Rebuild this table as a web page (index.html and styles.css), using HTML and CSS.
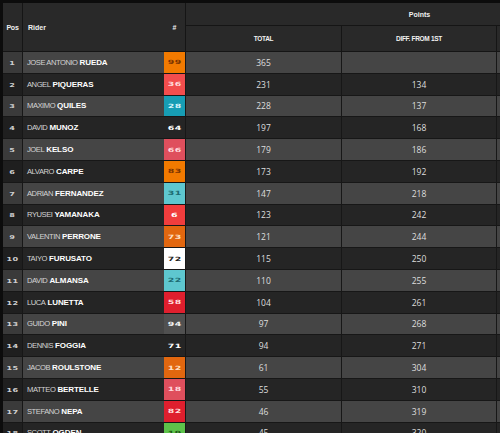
FILE: index.html
```html
<!DOCTYPE html>
<html>
<head>
<meta charset="utf-8">
<link rel="stylesheet" href="styles.css">
</head>
<body>
<div class="viewport">
<div class="wrap">
  <div class="head">
    <div class="h-pos">Pos</div>
    <div class="h-rider">Rider</div>
    <div class="h-num">#</div>
    <div class="h-points">Points</div>
    <div class="h-total">TOTAL</div>
    <div class="h-diff">DIFF. FROM 1ST</div>
    <div class="h-extra"></div>
  </div>
  <div class="body">
    <div class="row odd"><div class="pos"><span class="d">1</span></div><div class="name"><span class="fn">JOSE ANTONIO</span> <span class="ln">RUEDA</span></div><div class="num b-orange-dk"><span class="d">99</span></div><div class="pt">365</div><div class="df"></div><div class="ex"></div></div>
    <div class="row"><div class="pos"><span class="d">2</span></div><div class="name"><span class="fn">ANGEL</span> <span class="ln">PIQUERAS</span></div><div class="num b-red-lt"><span class="d">36</span></div><div class="pt">231</div><div class="df">134</div><div class="ex"></div></div>
    <div class="row odd"><div class="pos"><span class="d">3</span></div><div class="name"><span class="fn">MAXIMO</span> <span class="ln">QUILES</span></div><div class="num b-teal"><span class="d">28</span></div><div class="pt">228</div><div class="df">137</div><div class="ex"></div></div>
    <div class="row"><div class="pos"><span class="d">4</span></div><div class="name"><span class="fn">DAVID</span> <span class="ln">MUNOZ</span></div><div class="num"><span class="d">64</span></div><div class="pt">197</div><div class="df">168</div><div class="ex"></div></div>
    <div class="row odd"><div class="pos"><span class="d">5</span></div><div class="name"><span class="fn">JOEL</span> <span class="ln">KELSO</span></div><div class="num b-pink"><span class="d">66</span></div><div class="pt">179</div><div class="df">186</div><div class="ex"></div></div>
    <div class="row"><div class="pos"><span class="d">6</span></div><div class="name"><span class="fn">ALVARO</span> <span class="ln">CARPE</span></div><div class="num b-orange-dk"><span class="d">83</span></div><div class="pt">173</div><div class="df">192</div><div class="ex"></div></div>
    <div class="row odd"><div class="pos"><span class="d">7</span></div><div class="name"><span class="fn">ADRIAN</span> <span class="ln">FERNANDEZ</span></div><div class="num b-cyan"><span class="d">31</span></div><div class="pt">147</div><div class="df">218</div><div class="ex"></div></div>
    <div class="row"><div class="pos"><span class="d">8</span></div><div class="name"><span class="fn">RYUSEI</span> <span class="ln">YAMANAKA</span></div><div class="num b-red"><span class="d">6</span></div><div class="pt">123</div><div class="df">242</div><div class="ex"></div></div>
    <div class="row odd"><div class="pos"><span class="d">9</span></div><div class="name"><span class="fn">VALENTIN</span> <span class="ln">PERRONE</span></div><div class="num b-orange"><span class="d">73</span></div><div class="pt">121</div><div class="df">244</div><div class="ex"></div></div>
    <div class="row"><div class="pos"><span class="d">10</span></div><div class="name"><span class="fn">TAIYO</span> <span class="ln">FURUSATO</span></div><div class="num b-white"><span class="d">72</span></div><div class="pt">115</div><div class="df">250</div><div class="ex"></div></div>
    <div class="row odd"><div class="pos"><span class="d">11</span></div><div class="name"><span class="fn">DAVID</span> <span class="ln">ALMANSA</span></div><div class="num b-cyan"><span class="d">22</span></div><div class="pt">110</div><div class="df">255</div><div class="ex"></div></div>
    <div class="row"><div class="pos"><span class="d">12</span></div><div class="name"><span class="fn">LUCA</span> <span class="ln">LUNETTA</span></div><div class="num b-red-dk"><span class="d">58</span></div><div class="pt">104</div><div class="df">261</div><div class="ex"></div></div>
    <div class="row odd"><div class="pos"><span class="d">13</span></div><div class="name"><span class="fn">GUIDO</span> <span class="ln">PINI</span></div><div class="num b-gray"><span class="d">94</span></div><div class="pt">97</div><div class="df">268</div><div class="ex"></div></div>
    <div class="row"><div class="pos"><span class="d">14</span></div><div class="name"><span class="fn">DENNIS</span> <span class="ln">FOGGIA</span></div><div class="num"><span class="d">71</span></div><div class="pt">94</div><div class="df">271</div><div class="ex"></div></div>
    <div class="row odd"><div class="pos"><span class="d">15</span></div><div class="name"><span class="fn">JACOB</span> <span class="ln">ROULSTONE</span></div><div class="num b-orange"><span class="d">12</span></div><div class="pt">61</div><div class="df">304</div><div class="ex"></div></div>
    <div class="row"><div class="pos"><span class="d">16</span></div><div class="name"><span class="fn">MATTEO</span> <span class="ln">BERTELLE</span></div><div class="num b-pink"><span class="d">18</span></div><div class="pt">55</div><div class="df">310</div><div class="ex"></div></div>
    <div class="row odd"><div class="pos"><span class="d">17</span></div><div class="name"><span class="fn">STEFANO</span> <span class="ln">NEPA</span></div><div class="num b-red-dk"><span class="d">82</span></div><div class="pt">46</div><div class="df">319</div><div class="ex"></div></div>
    <div class="row"><div class="pos"><span class="d">18</span></div><div class="name"><span class="fn">SCOTT</span> <span class="ln">OGDEN</span></div><div class="num b-green"><span class="d">19</span></div><div class="pt">45</div><div class="df">320</div><div class="ex"></div></div>
  </div>
</div>
</div>
</body>
</html>
```
FILE: styles.css
```css
html, body {
  margin: 0;
  padding: 0;
  background: #0c0c0c;
}
.viewport {
  width: 500px;
  height: 433px;
  overflow: hidden;
}
.wrap {
  padding: 3px 0 0 3px;
  width: 650px;
  font-family: "Open Sans", "Liberation Sans", sans-serif;
  color: #e6e6e6;
}
.head {
  display: grid;
  grid-template-columns: 20px 141px 22px 156px 155px 156px;
  grid-template-rows: 23px 26px;
  background: #292929;
}
.head > div {
  box-sizing: border-box;
  border-bottom: 1px solid #151515;
  display: flex;
  align-items: center;
  font-weight: 700;
  font-size: 7px;
  color: #f0f0f0;
  font-family: "Liberation Sans", sans-serif;
}
.h-pos {
  grid-row: 1 / 3;
  grid-column: 1;
  border-right: 1px solid #151515;
  justify-content: center;
  letter-spacing: -0.2px;
}
.h-rider {
  grid-row: 1 / 3;
  grid-column: 2;
  padding-left: 5px;
}
.h-num {
  grid-row: 1 / 3;
  grid-column: 3;
  border-right: 1px solid #151515;
  justify-content: center;
}
.h-points {
  grid-row: 1;
  grid-column: 4 / 7;
  justify-content: center;
}
.h-total, .h-diff {
  grid-row: 2;
  border-right: 1px solid #151515;
  justify-content: center;
  font-size: 6.5px !important;
  letter-spacing: -0.3px;
}
.h-total { grid-column: 4; }
.h-diff { grid-column: 5; }
.h-extra { grid-row: 2; grid-column: 6; }

.row {
  display: grid;
  grid-template-columns: 20px 141px 22px 156px 155px 156px;
  height: 21.8px;
  box-sizing: border-box;
  border-bottom: 1px solid #171717;
  background: #252525;
}
.row.odd { background: #454545; }
.row > div {
  display: flex;
  align-items: center;
  box-sizing: border-box;
  overflow: hidden;
  white-space: nowrap;
}
.pos {
  border-right: 1px solid #171717;
  justify-content: center;
  background: #1f1f1f;
  color: #cfcfcf;
}
.row.odd .pos { background: #3a3a3a; }
.d {
  display: inline-block;
  font-family: "DejaVu Sans", sans-serif;
  font-weight: 700;
  font-size: 6px;
  transform: scale(1.35, 0.9);
  letter-spacing: 0.3px;
}
.num .d {
  font-size: 6.5px;
  transform: scale(1.45, 0.9);
  letter-spacing: 0.2px;
}
.name {
  padding-left: 4px;
  font-family: "Liberation Sans", sans-serif;
  font-size: 8px;
}
.fn {
  color: #d4d4d4;
  letter-spacing: -0.45px;
  font-size: 7.6px;
  margin-right: 2px;
}
.ln {
  color: #ffffff;
  font-weight: 700;
  letter-spacing: -0.1px;
}
.num {
  justify-content: center;
  border-right: 1px solid #171717;
  color: #ffffff;
}
.pt, .df {
  justify-content: center;
  border-right: 1px solid #171717;
  font-size: 8.5px;
  color: #dedede;
}
.b-orange-dk { background: #f27a00; color: #7c3500 !important; }
.b-orange { background: #e2670f; color: #ffe0c4 !important; }
.b-red-lt { background: #f24d4d; color: #ffd9d9 !important; }
.b-red { background: #f13d3d; color: #ffffff !important; }
.b-red-dk { background: #df1f2e; color: #ffdede !important; }
.b-pink { background: #df4f5d; color: #ffd8dc !important; }
.b-teal { background: #179db4; color: #d6f4fa !important; }
.b-cyan { background: #5ec7cf; color: #1c6b72 !important; }
.b-white { background: #ffffff; color: #222222 !important; }
.b-gray { background: #505050; color: #f0f0f0 !important; }
.b-green { background: #5dc24a; color: #1d5a14 !important; }
```
